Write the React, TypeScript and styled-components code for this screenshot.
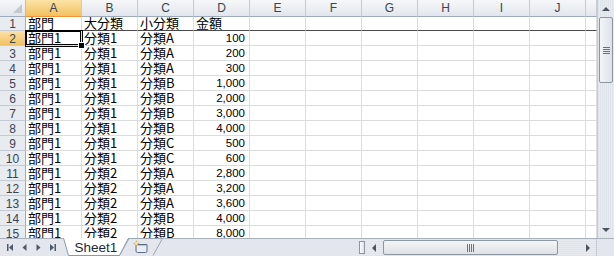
import styled, { createGlobalStyle, css } from 'styled-components'

const GlobalStyle = createGlobalStyle`
  html, body {
    margin: 0;
    padding: 0;
    background: #fff;
  }
`

const COLS = ['A', 'B', 'C', 'D', 'E', 'F', 'G', 'H', 'I', 'J']

const rows: [string, string, string, string][] = [
  ['部門', '大分類', '小分類', '金額'],
  ['部門1', '分類1', '分類A', '100'],
  ['部門1', '分類1', '分類A', '200'],
  ['部門1', '分類1', '分類A', '300'],
  ['部門1', '分類1', '分類B', '1,000'],
  ['部門1', '分類1', '分類B', '2,000'],
  ['部門1', '分類1', '分類B', '3,000'],
  ['部門1', '分類1', '分類B', '4,000'],
  ['部門1', '分類1', '分類C', '500'],
  ['部門1', '分類1', '分類C', '600'],
  ['部門1', '分類2', '分類A', '2,800'],
  ['部門1', '分類2', '分類A', '3,200'],
  ['部門1', '分類2', '分類A', '3,600'],
  ['部門1', '分類2', '分類B', '4,000'],
  ['部門1', '分類2', '分類B', '8,000'],
]

const Frame = styled.div`
  width: 614px;
  height: 256px;
  display: flex;
  flex-direction: column;
  overflow: hidden;
  background: #fff;
`

const SheetArea = styled.div`
  display: flex;
  height: 238px;
`

const Grid = styled.div`
  display: grid;
  grid-template-columns: 26px repeat(10, 56px) 11px;
  grid-template-rows: 17px 14px repeat(14, 15px);
  width: 597px;
  overflow: hidden;
`

const headBg = css`
  background: linear-gradient(#f6f7f9, #e2e6ec);
  color: #3a4452;
  font-family: 'Liberation Sans', Arial, sans-serif;
  font-size: 12px;
`

const activeBg = css`
  background: linear-gradient(#fbe3a6, #f1c15f);
`

const Corner = styled.div`
  ${headBg};
  position: relative;
  border-right: 1px solid #b6bdc8;
  border-bottom: 1px solid #9eabbd;

  &::after {
    content: '';
    position: absolute;
    right: 3px;
    bottom: 3px;
    border-left: 9px solid transparent;
    border-bottom: 9px solid #c4c9d0;
  }
`

const ColHead = styled.div<{ $active?: boolean }>`
  ${headBg};
  ${p => p.$active && activeBg};
  display: flex;
  align-items: center;
  justify-content: center;
  border-right: 1px solid #c5cbd4;
  border-bottom: 1px solid ${p => (p.$active ? '#f29436' : '#9eabbd')};
  box-sizing: border-box;
`

const RowHead = styled.div<{ $active?: boolean }>`
  ${headBg};
  background: ${p => (p.$active ? 'linear-gradient(#fbe3a6, #f1c15f)' : '#e8ebef')};
  display: flex;
  align-items: center;
  justify-content: center;
  border-right: 1px solid ${p => (p.$active ? '#f29436' : '#9eabbd')};
  border-bottom: 1px solid #c5cbd4;
  box-sizing: border-box;
  padding-top: 1px;
`

const Cell = styled.div<{ $num?: boolean; $freeze?: boolean; $selected?: boolean }>`
  position: relative;
  box-sizing: border-box;
  border-right: 1px solid #dadcdd;
  border-bottom: 1px solid ${p => (p.$freeze ? '#4a4a4a' : '#dadcdd')};
  display: flex;
  align-items: flex-end;
  justify-content: ${p => (p.$num ? 'flex-end' : 'flex-start')};
  padding: 0 ${p => (p.$num ? '4px' : '0')} 0 ${p => (p.$num ? '0' : '2px')};
  font-family: ${p =>
    p.$num ? "'Liberation Sans', Arial, sans-serif" : "'Noto Sans CJK JP', sans-serif"};
  font-size: ${p => (p.$num ? '11.5px' : '13px')};
  line-height: 14px;
  color: #000;
  white-space: nowrap;

  ${p =>
    p.$selected &&
    css`
      z-index: 2;
      box-shadow: 0 0 0 1px #000, inset 0 0 0 1px #000;

      &::after {
        content: '';
        position: absolute;
        right: -4px;
        bottom: -4px;
        width: 5px;
        height: 5px;
        background: #000;
        border: 1px solid #fff;
      }
    `}
`

const VScroll = styled.div`
  width: 17px;
  display: flex;
  flex-direction: column;
  background: repeating-linear-gradient(90deg, #dfe3ea 0 1px, #e8ebf0 1px 2px);
  border-left: 1px solid #c6cbd3;
  box-sizing: border-box;
`

const ArrowBox = styled.div<{ $w?: number; $h?: number }>`
  width: ${p => (p.$w ? `${p.$w}px` : '100%')};
  height: ${p => (p.$h ? `${p.$h}px` : '100%')};
  display: flex;
  align-items: center;
  justify-content: center;
  flex-shrink: 0;
`

const VThumb = styled.div`
  margin: 0 1px;
  height: 66px;
  border: 1px solid #8e969f;
  border-radius: 2px;
  background: linear-gradient(90deg, #f4f5f7, #dde1e7);
  display: flex;
  align-items: center;
  justify-content: center;
  box-sizing: border-box;
`

const VTrack = styled.div`
  flex: 1;
`

const Grip = styled.div<{ $vertical?: boolean }>`
  width: ${p => (p.$vertical ? '7px' : '8px')};
  height: ${p => (p.$vertical ? '7px' : '8px')};
  background: ${p =>
    p.$vertical
      ? 'repeating-linear-gradient(180deg, #6c737c 0 1px, transparent 1px 2px)'
      : 'repeating-linear-gradient(90deg, #6c737c 0 1px, transparent 1px 2px)'};
`

const BottomBar = styled.div`
  height: 18px;
  display: flex;
  background: #e3e7ed;
  border-top: 1px solid #a9b1bc;
  box-sizing: border-box;
`

const NavButtons = styled.div`
  width: 63px;
  display: flex;
  align-items: center;
  justify-content: space-around;
  padding: 0 3px;
  box-sizing: border-box;
`

const Tabs = styled.div`
  display: flex;
  width: 296px;
  margin-top: -1px;
`

const Tab = styled.div<{ $w: number }>`
  position: relative;
  width: ${p => p.$w}px;
  height: 18px;
  display: flex;
  align-items: center;
  justify-content: center;
  font-family: 'Liberation Sans', Arial, sans-serif;
  font-size: 13.5px;
  color: #1e2a38;
  flex-shrink: 0;

  & + & {
    margin-left: -10px;
  }

  svg.shape {
    position: absolute;
    inset: 0;
    z-index: 0;
  }

  span,
  svg.icon {
    position: relative;
    z-index: 1;
  }
`

const Splitter = styled.div`
  width: 6px;
  margin: 2px 0;
  border: 1px solid #8e969f;
  background: linear-gradient(90deg, #fafbfc, #dfe3e9);
  box-sizing: border-box;
`

const HScroll = styled.div`
  flex: 1;
  display: flex;
  background: repeating-linear-gradient(180deg, #dfe3ea 0 1px, #e8ebf0 1px 2px);
`

const HThumb = styled.div`
  width: 175px;
  margin: 1px 0;
  border: 1px solid #8e969f;
  border-radius: 2px;
  background: linear-gradient(#f4f5f7, #dde1e7);
  display: flex;
  align-items: center;
  justify-content: center;
  box-sizing: border-box;
`

const HTrack = styled.div`
  flex: 1;
`

const CornerBox = styled.div`
  width: 17px;
  background: #e3e7ed;
  border-left: 1px solid #c6cbd3;
`

const Tri = ({ dir }: { dir: 'up' | 'down' | 'left' | 'right' }) => {
  const pts = {
    up: '0,4 4,0 8,4',
    down: '0,0 8,0 4,4',
    left: '4,0 4,8 0,4',
    right: '0,0 0,8 4,4',
  }[dir]
  const vertical = dir === 'up' || dir === 'down'
  return (
    <svg width={vertical ? 8 : 4} height={vertical ? 4 : 8} viewBox={vertical ? '0 0 8 4' : '0 0 4 8'}>
      <polygon points={pts} fill="#4d5560" />
    </svg>
  )
}

const NavIcon = ({ kind }: { kind: 'first' | 'prev' | 'next' | 'last' }) => (
  <svg width="9" height="9" viewBox="0 0 9 9">
    {kind === 'first' && (
      <>
        <rect x="1" y="1" width="1.5" height="7" fill="#4d5a6b" />
        <polygon points="7,1 7,8 3,4.5" fill="#4d5a6b" />
      </>
    )}
    {kind === 'prev' && <polygon points="6.5,1 6.5,8 2.5,4.5" fill="#4d5a6b" />}
    {kind === 'next' && <polygon points="2.5,1 2.5,8 6.5,4.5" fill="#4d5a6b" />}
    {kind === 'last' && (
      <>
        <polygon points="2,1 2,8 6,4.5" fill="#4d5a6b" />
        <rect x="6.5" y="1" width="1.5" height="7" fill="#4d5a6b" />
      </>
    )}
  </svg>
)

const NewSheetIcon = () => (
  <svg className="icon" width="18" height="14" viewBox="0 0 18 14">
    <path d="M4 4.5 H15 V11 Q15 12.5 13.5 12.5 H5.5 Q4 12.5 4 11 Z" fill="#e9eef6" stroke="#5b6d86" />
    <path d="M5 5.5 H14" stroke="#b7c4d6" />
    <g transform="translate(4.5 3.5)">
      <path d="M0 -3.5 L1 -1 L3.5 0 L1 1 L0 3.5 L-1 1 L-3.5 0 L-1 -1 Z" fill="#f3a420" />
      <circle r="1.3" fill="#fff4c2" />
    </g>
  </svg>
)

export default function App() {
  return (
    <Frame>
      <GlobalStyle />
      <SheetArea>
        <Grid>
          <Corner />
          {COLS.map(c => (
            <ColHead key={c} $active={c === 'A'}>
              {c}
            </ColHead>
          ))}
          <ColHead />
          {rows.map((r, i) => (
            <Row key={i} index={i} data={r} />
          ))}
        </Grid>
        <VScroll>
          <ArrowBox $h={17}>
            <Tri dir="up" />
          </ArrowBox>
          <VThumb>
            <Grip $vertical />
          </VThumb>
          <VTrack />
          <ArrowBox $h={17}>
            <Tri dir="down" />
          </ArrowBox>
        </VScroll>
      </SheetArea>
      <BottomBar>
        <NavButtons>
          <NavIcon kind="first" />
          <NavIcon kind="prev" />
          <NavIcon kind="next" />
          <NavIcon kind="last" />
        </NavButtons>
        <Tabs>
          <Tab $w={66}>
            <svg className="shape" width="66" height="18" viewBox="0 0 66 18">
              <path d="M0.5 0 L5.5 17.5 H56.5 L65.5 0" fill="#fff" stroke="#8e99a8" />
              <path d="M1 0 H65" stroke="#fff" strokeWidth="2" />
            </svg>
            <span>Sheet1</span>
          </Tab>
          <Tab $w={44}>
            <svg className="shape" width="44" height="18" viewBox="0 0 44 18">
              <path d="M10 0.5 L0.5 17.5 M10 0.5 H43.5 L34 17.5" fill="none" stroke="#9aa5b4" />
            </svg>
            <NewSheetIcon />
          </Tab>
        </Tabs>
        <Splitter />
        <HScroll>
          <ArrowBox $w={18}>
            <Tri dir="left" />
          </ArrowBox>
          <HThumb>
            <Grip />
          </HThumb>
          <HTrack />
          <ArrowBox $w={17}>
            <Tri dir="right" />
          </ArrowBox>
        </HScroll>
        <CornerBox />
      </BottomBar>
    </Frame>
  )
}

function Row({ index, data }: { index: number; data: [string, string, string, string] }) {
  const rowNo = index + 1
  const freeze = rowNo === 1
  return (
    <>
      <RowHead $active={rowNo === 2}>{rowNo}</RowHead>
      {COLS.map((c, ci) => {
        const value = ci < 4 ? data[ci] : ''
        return (
          <Cell key={c} $num={ci === 3 && rowNo > 1} $freeze={freeze} $selected={rowNo === 2 && ci === 0}>
            {value}
          </Cell>
        )
      })}
      <Cell $freeze={freeze} />
    </>
  )
}
